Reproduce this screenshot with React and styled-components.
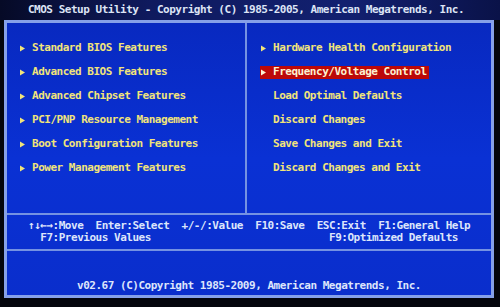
import React from "react";
import styled, { createGlobalStyle } from "styled-components";

const Global = createGlobalStyle`
  html, body { margin: 0; padding: 0; background: #04050c; }
  body { width: 500px; height: 307px; overflow: hidden; }
`;

const Screen = styled.div`
  width: 500px;
  height: 307px;
  background: #04050c;
  display: flex;
  flex-direction: column;
  font-family: "DejaVu Sans Mono", "Liberation Mono", monospace;
  font-weight: bold;
  font-size: 11px;
  letter-spacing: -0.48px;
  line-height: 12px;
`;

const TitleBar = styled.div`
  height: 20px;
  background: linear-gradient(90deg, #060a26 0%, #0f1a5e 30%, #122070 70%, #0a1248 100%);
  color: #dde4f5;
  display: flex;
  align-items: center;
  justify-content: center;
  white-space: pre;
  padding-right: 8px;
`;

const Frame = styled.div`
  margin: 0 6px 0 4px;
  height: 272px;
  border: 3px solid #86a0e8;
  background: linear-gradient(180deg, #0829c0 0%, #0a31d4 50%, #0a2ecc 100%);
  display: flex;
  flex-direction: column;
`;

const MenuArea = styled.div`
  height: 190px;
  display: grid;
  grid-template-columns: 238px 2px 1fr;
`;

const VLine = styled.div`
  background: #7592e2;
`;

const HLine = styled.div`
  height: 2px;
  background: #7592e2;
`;

const Column = styled.div`
  padding: 13px 0 0 ${(p) => p.$pad}px;
  display: flex;
  flex-direction: column;
`;

const Item = styled.div`
  height: 24px;
  display: flex;
  align-items: center;
`;

const Label = styled.span`
  display: inline-flex;
  align-items: center;
  height: 13px;
  padding: 0 2px 0 ${(p) => (p.$active ? 1 : 0)}px;
  margin-left: ${(p) => (p.$active ? -1 : 0)}px;
  background: ${(p) => (p.$active ? "#bc0808" : "transparent")};
  color: ${(p) => (p.$active ? "#fbf2d2" : "#f1e47a")};
  white-space: pre;
`;

const ArrowSlot = styled.span`
  width: 12px;
  display: inline-flex;
  align-items: center;
`;

const Help = styled.div`
  height: 34px;
  padding: 5px 0 0 21px;
  box-sizing: border-box;
  color: #dde5fb;
  white-space: pre;
`;

const Footer = styled.div`
  flex: 1;
  display: flex;
  align-items: flex-end;
  justify-content: center;
  padding-bottom: 3px;
  color: #dde5fb;
  white-space: pre;
`;

const Arrow = ({ color }) => (
  <svg width="5" height="7" viewBox="0 0 5 7">
    <polygon points="0,0.5 5,3.5 0,6.5" fill={color} />
  </svg>
);

const left = [
  "Standard BIOS Features",
  "Advanced BIOS Features",
  "Advanced Chipset Features",
  "PCI/PNP Resource Management",
  "Boot Configuration Features",
  "Power Management Features",
];

const right = [
  { t: "Hardware Health Configuration", a: true },
  { t: "Frequency/Voltage Control", a: true, active: true },
  { t: "Load Optimal Defaults" },
  { t: "Discard Changes" },
  { t: "Save Changes and Exit" },
  { t: "Discard Changes and Exit" },
];

export default function App() {
  return (
    <Screen>
      <Global />
      <TitleBar>CMOS Setup Utility - Copyright (C) 1985-2005, American Megatrends, Inc.</TitleBar>
      <Frame>
        <MenuArea>
          <Column $pad={13}>
            {left.map((t) => (
              <Item key={t}>
                <Label>
                  <ArrowSlot>
                    <Arrow color="#f1e47a" />
                  </ArrowSlot>
                  {t}
                </Label>
              </Item>
            ))}
          </Column>
          <VLine />
          <Column $pad={14}>
            {right.map((r) => (
              <Item key={r.t}>
                <Label $active={r.active}>
                  <ArrowSlot>
                    {r.a && <Arrow color={r.active ? "#fbf2d2" : "#f1e47a"} />}
                  </ArrowSlot>
                  {r.t}
                </Label>
              </Item>
            ))}
          </Column>
        </MenuArea>
        <HLine />
        <Help>
          <div>{"↑↓←→:Move  Enter:Select  +/-/:Value  F10:Save  ESC:Exit  F1:General Help"}</div>
          <div>{"  F7:Previous Values                             F9:Optimized Defaults"}</div>
        </Help>
        <HLine />
        <Footer>v02.67 (C)Copyright 1985-2009, American Megatrends, Inc.</Footer>
      </Frame>
    </Screen>
  );
}
